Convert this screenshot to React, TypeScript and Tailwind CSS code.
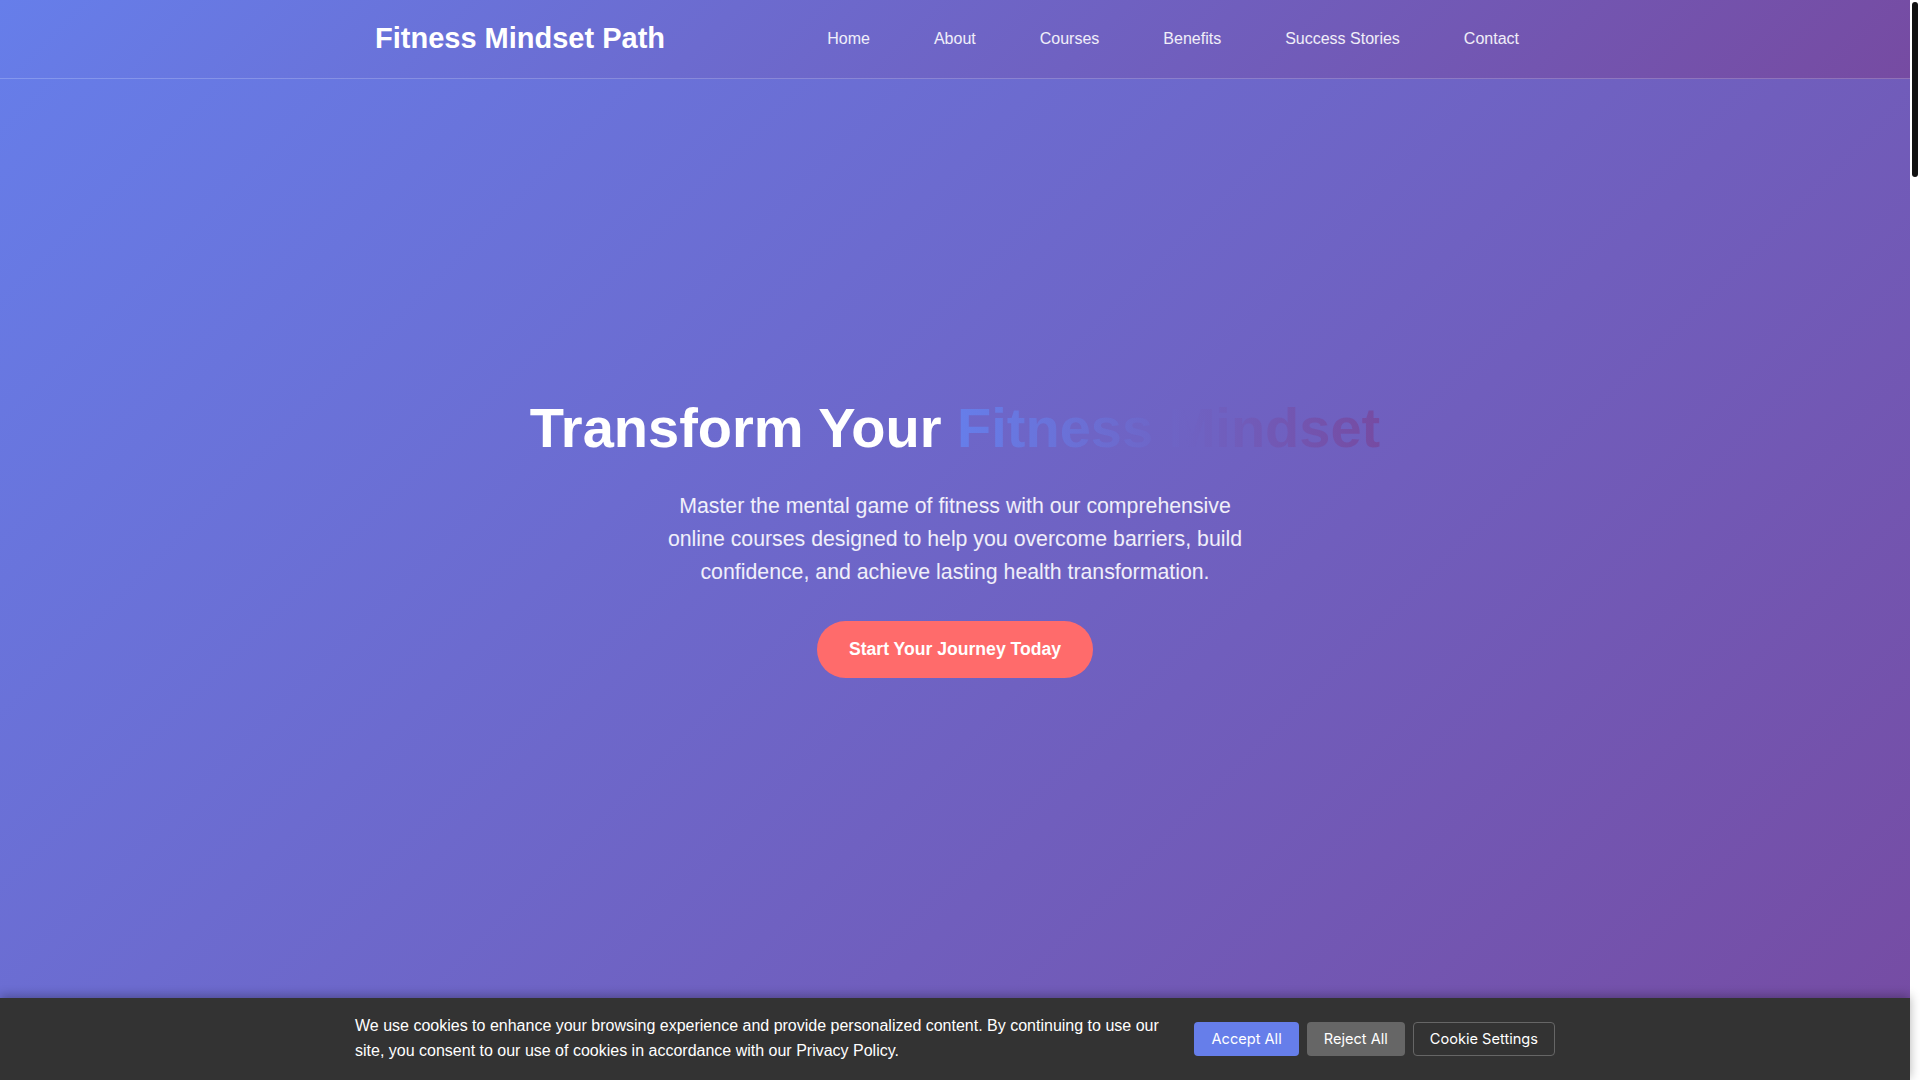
import React from "react";

const navItems = ["Home", "About", "Courses", "Benefits", "Success Stories", "Contact"];

export default function App() {
  return (
    <div className="flex h-screen w-full overflow-hidden font-['Liberation_Sans',Arial,sans-serif]">
      <div className="relative h-full min-w-0 flex-1">
        <section className="flex h-full w-full items-center justify-center bg-[linear-gradient(135deg,#667eea_0%,#764ba2_100%)] px-5 pb-[8px]">
          <div className="flex flex-col items-center text-center">
            <h1 className="mb-[29px] text-[56px] font-bold leading-[1.2] text-white">
              Transform Your{" "}
              <span className="bg-[linear-gradient(90deg,#667eea_0%,#764ba2_100%)] bg-clip-text text-transparent">
                Fitness Mindset
              </span>
            </h1>
            <p className="mx-auto mb-8 max-w-[600px] text-[21.3px] leading-[33px] text-white/90">
              Master the mental game of fitness with our comprehensive online courses designed to help you overcome barriers, build confidence, and achieve lasting health transformation.
            </p>
            <button className="rounded-full bg-[#ff6b6b] px-8 py-4 text-[17.6px] font-bold leading-[1.45] text-white">
              Start Your Journey Today
            </button>
          </div>
        </section>

        <header className="absolute left-0 right-0 top-0 z-20 h-[79px] border-b border-white/20 bg-[linear-gradient(135deg,#667eea_0%,#764ba2_100%)]">
          <div className="mx-auto flex h-full max-w-[1200px] items-center justify-between px-5">
            <div className="text-[29px] font-bold leading-[1.5] text-white">Fitness Mindset Path</div>
            <nav className="flex items-center gap-8">
              {navItems.map((item) => (
                <a key={item} className="px-4 py-2 text-base text-white/90">
                  {item}
                </a>
              ))}
            </nav>
          </div>
        </header>

        <div className="absolute bottom-0 left-0 right-0 z-30 bg-[#333] py-4 shadow-[0_-2px_10px_rgba(0,0,0,0.3)]">
          <div className="mx-auto flex max-w-[1200px] items-center justify-between gap-6">
            <p className="flex-1 text-base leading-[1.55] text-white">
              We use cookies to enhance your browsing experience and provide personalized content. By continuing to use our site, you consent to our use of cookies in accordance with our Privacy Policy.
            </p>
            <div className="flex shrink-0 gap-2 font-['Inter',sans-serif] text-[14.6px] leading-4 text-white">
              <button className="rounded border border-transparent bg-[#667eea] px-4 py-2">Accept All</button>
              <button className="rounded border border-transparent bg-[#666] px-4 py-2">Reject All</button>
              <button className="rounded border border-[#666] bg-transparent px-4 py-2">Cookie Settings</button>
            </div>
          </div>
        </div>
      </div>

      <div className="flex h-full w-[10px] shrink-0 justify-center bg-white pt-[2px]">
        <div className="h-[175px] w-[6px] rounded-full bg-[#111]" />
      </div>
    </div>
  );
}
